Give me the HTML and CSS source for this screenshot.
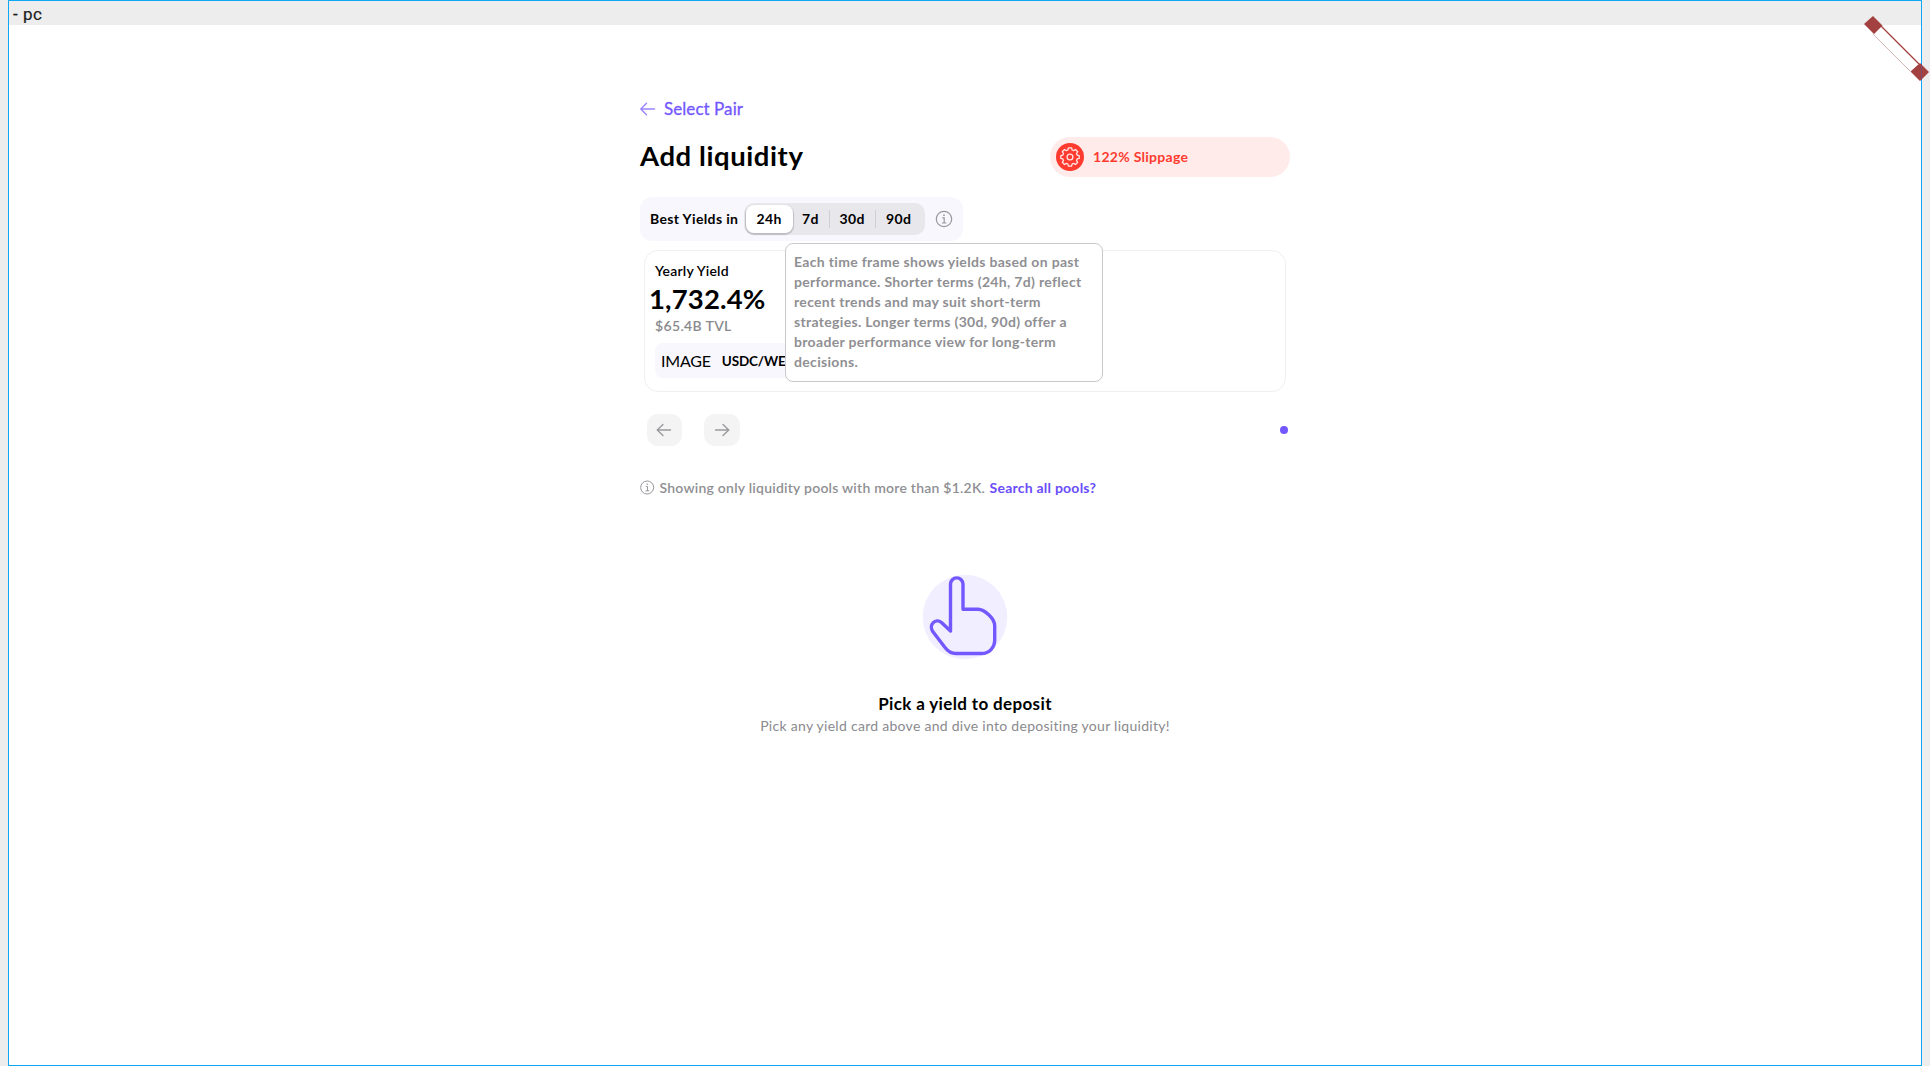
FILE: index.html
```
<!DOCTYPE html>
<html lang="en">
<head>
<meta charset="utf-8">
<title>Add liquidity</title>
<link rel="stylesheet" href="styles.css">
</head>
<body>
<div class="frame">
  <div class="frame-title">- pc</div>
  <main class="content">
    <a class="back">
      <svg width="16" height="14" viewBox="0 0 16 14"><path d="M14.500 7H.8M6.500 1.200.8 7l5.700 5.800" fill="none" stroke="#9b85ff" stroke-width="1.400" stroke-linecap="round" stroke-linejoin="round"/></svg>
      <span>Select Pair</span>
    </a>
    <header class="heading">
      <h1>Add liquidity</h1>
      <div class="slippage">
        <span class="gear">
          <svg width="20" height="20" viewBox="0 0 20 20" fill="none" stroke="#ffe5e3" stroke-width="1.3" stroke-linejoin="round"><circle cx="10" cy="10" r="2.9"/><path d="M8.4 .8h3.2l.5 2.2 1.5.6 1.9-1.1 2.2 2.2-1.2 1.9.6 1.5 2.1.5v2.8l-2.1.5-.6 1.5 1.2 1.9-2.2 2.2-1.9-1.1-1.5.6-.5 2.2H8.4l-.5-2.2-1.5-.6-1.9 1.1-2.2-2.2 1.2-1.9-.6-1.5-2.1-.5V8.6l2.1-.5.6-1.5-1.2-1.9 2.2-2.2 1.9 1.1 1.5-.6z"/></svg>
        </span>
        <span class="slippage-text">122% Slippage</span>
      </div>
    </header>

    <section class="yield-bar">
      <span class="yield-label">Best Yields in</span>
      <div class="segments">
        <span class="segment selected">24h</span>
        <span class="segment">7d</span>
        <span class="segment divided">30d</span>
        <span class="segment divided">90d</span>
      </div>
      <div class="info">
        <svg width="18" height="18" viewBox="0 0 18 18" fill="none" stroke="#98989d" stroke-width="1.2"><circle cx="9" cy="9" r="7.7"/><path d="M7.2 7.8h2V13M6.8 13h4.6"/><circle cx="9" cy="5.2" r=".9" fill="#98989d" stroke="none"/></svg>
        <div class="tooltip">Each time frame shows yields based on past<br>performance. Shorter terms (24h, 7d) reflect<br>recent trends and may suit short-term<br>strategies. Longer terms (30d, 90d) offer a<br>broader performance view for long-term<br>decisions.</div>
      </div>
    </section>

    <section class="card">
      <div class="card-title">Yearly Yield</div>
      <div class="card-value">1,732.4%</div>
      <div class="card-tvl">$65.4B TVL</div>
      <div class="pair"><span class="pair-image">IMAGE</span><span class="pair-name">USDC/WE</span></div>
    </section>

    <nav class="pager">
      <span class="pager-button"><svg width="16" height="14" viewBox="0 0 16 14"><path d="M14.5 7H1.2M7 1.5 1.2 7 7 12.5" fill="none" stroke="#9b9b9f" stroke-width="1.4" stroke-linecap="round" stroke-linejoin="round"/></svg></span>
      <span class="pager-button"><svg width="16" height="14" viewBox="0 0 16 14"><path d="M1.5 7h13.3M9 1.5 14.8 7 9 12.5" fill="none" stroke="#9b9b9f" stroke-width="1.4" stroke-linecap="round" stroke-linejoin="round"/></svg></span>
      <span class="dot"></span>
    </nav>

    <p class="notice">
      <svg width="15" height="15" viewBox="0 0 18 18" fill="none" stroke="#98989d" stroke-width="1.2"><circle cx="8.600" cy="9" r="7.8"/><path d="M7 7.800h2V13M6.500 13h4.600"/><circle cx="8.700" cy="5.200" r=".9" fill="#98989d" stroke="none"/></svg>
      <span>Showing only liquidity pools with more than $1.2K.</span>
      <a>Search all pools?</a>
    </p>

    <section class="empty">
      <svg width="86" height="86" viewBox="0 0 86 86"><circle cx="43" cy="43" r="42.3" fill="#f1eeff"/><path d="M28.500 57V10.100a6 6 0 0 1 12.500 0V35.300h15c4 0 7 2 11 5.800s5.700 6.500 5.700 11V66c0 7.500-5.500 13.500-13 13.500H34c-5 0-8-2-11-6L10.600 57.200C6.500 51 13.500 43.500 19.500 48.500z" fill="none" stroke="#7357ff" stroke-width="3.400" stroke-linejoin="round"/></svg>
      <h2>Pick a yield to deposit</h2>
      <p>Pick any yield card above and dive into depositing your liquidity!</p>
    </section>
  </main>
</div>
<svg class="overflow-mark" width="66" height="66" viewBox="0 0 66 66">
  <path d="m17 10 38 38-9 8L9 18z" fill="#fff"/>
  <path d="m17 10 38 38" stroke="#a34040" stroke-width="1.300"/>
  <path d="m9 18 37 37" stroke="#d8b5b5" stroke-width="1"/>
  <path d="m9 0 9.500 9.500-8.500 8.500L0 8zM56 47l9 9-9 9-9.500-9.500z" fill="#a34040"/>
  <path d="M57.500 48V64" stroke="#7b496a" stroke-width="1"/>
</svg>
</body>
</html>
```
FILE: styles.css
```
* { box-sizing: border-box; }
body {
  margin: 0;
  height: 1066px;
  padding: 0 8px;
  overflow: hidden;
  background: #ededed;
  font-family: Lato, "Noto Sans", sans-serif;
  color: #000;
}
svg { display: block; flex: none; }
.frame {
  width: 1914px;
  height: 1066px;
  border: 1px solid #0ca8f5;
  background: #fff;
}
.frame-title {
  height: 24px;
  padding: 2px 0 0 4px;
  background: #ededed;
  font: 400 17px/23px Roboto, sans-serif;
  letter-spacing: .5px;
  color: #1c1c1e;
  -webkit-text-stroke: .2px #1c1c1e;
}
.content {
  display: flex;
  flex-direction: column;
  width: 650px;
  margin-left: 631px;
  padding-top: 72px;
  white-space: nowrap;
}
.back {
  display: flex;
  align-items: center;
  gap: 8px;
  height: 24px;
  color: #7357ff;
  font-size: 17px;
  line-height: 24px;
  letter-spacing: .06px;
  -webkit-text-stroke: .3px #7357ff;
}
.heading {
  display: flex;
  justify-content: space-between;
  align-items: center;
  height: 40px;
  margin-top: 16px;
}
h1 {
  margin: 0;
  padding-bottom: 2px;
  font-size: 27.500px;
  line-height: 38px;
  letter-spacing: .58px;
}
.slippage {
  display: flex;
  align-items: center;
  gap: 9px;
  width: 240px;
  height: 40px;
  padding-left: 6px;
  border-radius: 20px;
  background: #ffebea;
  color: #ff3b30;
  font-size: 14px;
  font-weight: 700;
  letter-spacing: .28px;
}
.slippage-text { padding-bottom: 1px; }
.gear {
  display: grid;
  place-items: center;
  width: 28px;
  height: 28px;
  border-radius: 50%;
  background: #ff3b30;
}
.yield-bar {
  display: flex;
  align-items: center;
  width: 323px;
  height: 44px;
  margin-top: 20px;
  padding-left: 10px;
  border-radius: 12px;
  background: #f8f7fd;
  font-size: 14px;
  font-weight: 700;
}
.yield-label { width: 94px; padding-bottom: 1px; letter-spacing: .36px; }
.segments {
  display: flex;
  align-items: center;
  width: 181px;
  height: 32px;
  padding-left: 2px;
  border-radius: 10px;
  background: #e8e7ec;
}
.segment {
  width: 46.500px;
  line-height: 18px;
  text-align: center;
  letter-spacing: .4px;
}
.segment:nth-child(2) { width: 36px; }
.selected {
  line-height: 28px;
  border-radius: 8px;
  background: #fff;
  box-shadow: 0 1px 1px 1px #bebdc4;
}
.divided { border-left: 1px solid #cfced4; }
.info { position: relative; margin-left: 10px; }
.tooltip {
  position: absolute;
  top: 33px;
  left: -150px;
  width: 318px;
  height: 139px;
  padding: 8px;
  border: 1px solid #c9c9cc;
  border-radius: 8px;
  background: #fff;
  color: #8f8f93;
  font-size: 14px;
  line-height: 20px;
  letter-spacing: .32px;
}
.card {
  width: 642px;
  height: 142px;
  margin: 9px 0 0 4px;
  padding: 10px 10px 0;
  border: 1px solid #efeff0;
  border-radius: 14px;
}
.card-title { font-size: 14px; font-weight: 600; line-height: 20px; letter-spacing: .2px; }
.card-value { margin-left: -6px; font-size: 27.500px; font-weight: 700; line-height: 36px; letter-spacing: .15px; }
.card-tvl { color: #8a8a8e; font-size: 14px; font-weight: 600; line-height: 18px; letter-spacing: .35px; }
.pair {
  display: flex;
  align-items: center;
  gap: 11px;
  width: 260px;
  height: 35px;
  margin-top: 8px;
  padding-left: 6px;
  border-radius: 8px;
  background: #f8f7fd;
}
.pair-image { font-size: 16px; letter-spacing: -.2px; }
.pair-name { font-size: 13.500px; font-weight: 700; letter-spacing: -.15px; }
.pager { display: flex; align-items: center; gap: 22px; margin-top: 22px; padding: 0 2px 0 6.500px; }
.pager-button {
  display: grid;
  place-items: center;
  width: 35.500px;
  height: 32px;
  border-radius: 11px;
  background: #f4f4f5;
}
.dot { width: 8px; height: 8px; margin-left: auto; border-radius: 50%; background: #7357ff; }
.notice {
  display: flex;
  align-items: center;
  gap: 4.500px;
  height: 20px;
  margin: 31px 0 0;
  color: #8f8f93;
  font-size: 14px;
  font-weight: 600;
  letter-spacing: .23px;
}
.notice a { color: #6a4dfa; font-weight: 700; }
.empty { display: flex; flex-direction: column; align-items: center; margin-top: 77px; }
.empty h2 { margin: 32px 0 0; font-size: 17px; line-height: 24px; letter-spacing: .36px; }
.empty p { margin: -1px 0 0; color: #8a8a8e; font-size: 14px; line-height: 22px; letter-spacing: .28px; }
/* Diagonal marker lying over the frame's corner */
.overflow-mark { position: absolute; left: 1864px; top: 16px; }
```
